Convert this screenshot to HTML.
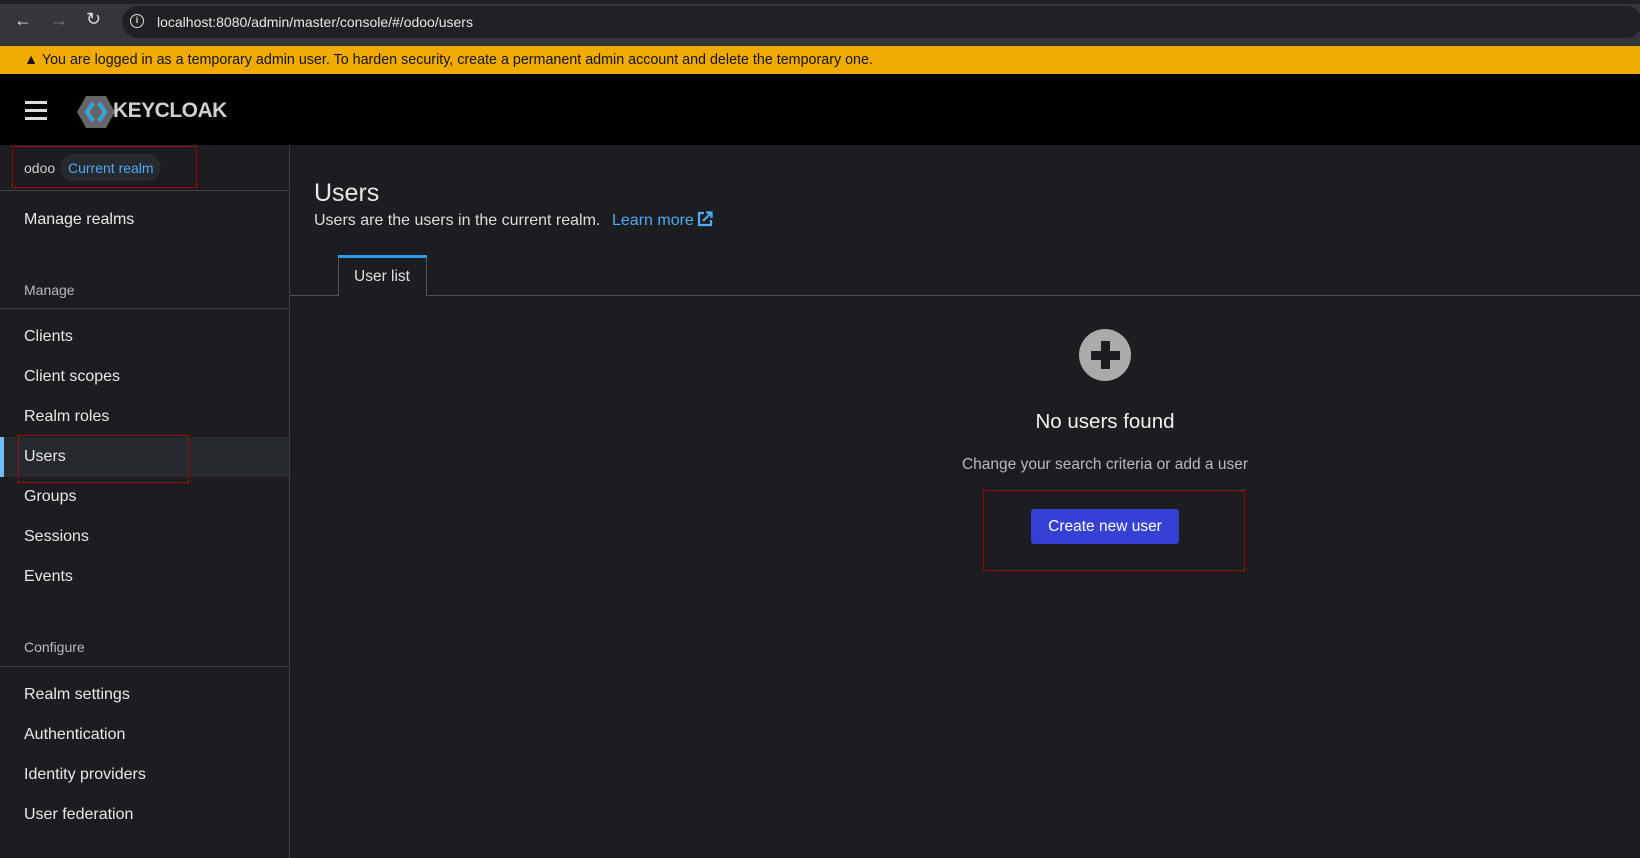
<!DOCTYPE html>
<html><head><meta charset="utf-8"><style>
*{margin:0;padding:0;box-sizing:border-box}
body{width:1640px;height:858px;overflow:hidden;background:#1b1d21;font-family:"Liberation Sans",sans-serif;color:#e0e0e0;position:relative}
.a{position:absolute;white-space:nowrap}
.nav{font-size:16px;color:#e8e8e8;left:24px}
.sec{font-size:14px;color:#b8bbbe;left:24px}
</style></head><body>
<div class="a" style="left:0;top:0;width:1640px;height:46px;background:#35363a"></div>
<div class="a" style="left:0;top:0;width:1640px;height:4px;background:#202124"></div>
<div class="a" style="left:122px;top:6px;width:1520px;height:32px;border-radius:16px;background:#202124"></div>
<div class="a" style="left:14px;top:10px;font-size:18px;color:#ddd">&#8592;</div>
<div class="a" style="left:50px;top:10px;font-size:18px;color:#777">&#8594;</div>
<div class="a" style="left:86px;top:9px;font-size:18px;color:#ddd">&#8635;</div>
<div class="a" style="left:130px;top:14px;width:14px;height:14px;border:1.5px solid #ddd;border-radius:50%;font-size:9px;text-align:center;line-height:11px;color:#ddd;font-weight:bold">i</div>
<div class="a" style="left:157px;top:14px;font-size:14px;color:#e8e8e8">localhost:8080/admin/master/console/#/odoo/users</div>
<div class="a" style="left:0;top:46px;width:1640px;height:28px;background:#f0ab00"></div>
<div class="a" style="left:24px;top:52px;font-size:14.3px;color:#151515">&#9650; You are logged in as a temporary admin user. To harden security, create a permanent admin account and delete the temporary one.</div>
<div class="a" style="left:0;top:74px;width:1640px;height:71px;background:#000"></div>
<div class="a" style="left:25px;top:101px;width:22px;height:3px;background:#ddd;box-shadow:0 8px 0 #ddd,0 16px 0 #ddd"></div>
<svg class="a" style="left:76px;top:95px" width="40" height="34" viewBox="0 0 40 34"><polygon points="10,1 30,1 39,17 30,33 10,33 1,17" fill="#666"/><path d="M17 8 L11 17 L17 26 M23 8 L29 17 L23 26" stroke="#39a5dc" stroke-width="4" fill="none"/></svg>
<div class="a" style="left:113px;top:99px;font-size:21px;font-weight:bold;color:#d0d0d0;letter-spacing:-0.5px">KEYCLOAK</div>
<div class="a" style="left:289px;top:145px;width:1px;height:713px;background:#3c3f42"></div>
<div class="a" style="left:0;top:190px;width:289px;height:1px;background:#3c3f42"></div>
<div class="a" style="left:12px;top:146px;width:185px;height:42px;border:1.5px solid #a30000"></div>
<div class="a" style="left:24px;top:160px;font-size:14px;color:#ccc">odoo</div>
<div class="a" style="left:60px;top:154px;width:101px;height:27px;border-radius:14px;background:#26292d"></div>
<div class="a" style="left:68px;top:160px;font-size:14px;color:#4dabf7">Current realm</div>
<div class="a nav" style="top:211px">Manage realms</div>
<div class="a sec" style="top:282px">Manage</div>
<div class="a" style="left:0;top:308px;width:289px;height:1px;background:#3c3f42"></div>
<div class="a nav" style="top:328px">Clients</div>
<div class="a nav" style="top:368px">Client scopes</div>
<div class="a nav" style="top:408px">Realm roles</div>
<div class="a" style="left:0;top:437px;width:289px;height:40px;background:#26292d"></div>
<div class="a" style="left:0;top:437px;width:4px;height:40px;background:#73bcf7"></div>
<div class="a" style="left:18px;top:435px;width:171px;height:48px;border:1.5px solid #a30000"></div>
<div class="a nav" style="top:448px">Users</div>
<div class="a nav" style="top:488px">Groups</div>
<div class="a nav" style="top:528px">Sessions</div>
<div class="a nav" style="top:568px">Events</div>
<div class="a sec" style="top:639px">Configure</div>
<div class="a" style="left:0;top:666px;width:289px;height:1px;background:#3c3f42"></div>
<div class="a nav" style="top:686px">Realm settings</div>
<div class="a nav" style="top:726px">Authentication</div>
<div class="a nav" style="top:766px">Identity providers</div>
<div class="a nav" style="top:806px">User federation</div>
<div class="a" style="left:314px;top:179px;font-size:25px;color:#e8e8e8">Users</div>
<div class="a" style="left:314px;top:212px;font-size:16px;color:#ddd">Users are the users in the current realm.</div>
<div class="a" style="left:612px;top:212px;font-size:16px;color:#4dabf7">Learn more</div>
<svg class="a" style="left:697px;top:211px" width="16" height="16" viewBox="0 0 16 16"><path d="M7 2H2v12h12V9" stroke="#4dabf7" stroke-width="2.2" fill="none"/><path d="M6 10L14 2M9 1.5h5.5V7" stroke="#4dabf7" stroke-width="2.2" fill="none"/></svg>
<div class="a" style="left:290px;top:295px;width:1350px;height:1px;background:#4f5255"></div>
<div class="a" style="left:338px;top:255px;width:89px;height:41px;border:1px solid #4f5255;border-bottom:none;background:#1b1d21"></div>
<div class="a" style="left:338px;top:255px;width:89px;height:3px;background:#2b9af3"></div>
<div class="a" style="left:354px;top:268px;font-size:15.5px;color:#e0e0e0">User list</div>
<div class="a" style="left:1079px;top:329px;width:52px;height:52px;border-radius:50%;background:#aaa"></div>
<div class="a" style="left:1101px;top:341px;width:9px;height:28px;background:#1b1d21"></div>
<div class="a" style="left:1091px;top:351px;width:29px;height:9px;background:#1b1d21"></div>
<div class="a" style="left:0;top:410px;width:2210px;text-align:center;font-size:20.5px;color:#f0f0f0">No users found</div>
<div class="a" style="left:0;top:456px;width:2210px;text-align:center;font-size:15.5px;color:#b8bbbe">Change your search criteria or add a user</div>
<div class="a" style="left:983px;top:490px;width:262px;height:81px;border:1.5px solid #a30000"></div>
<div class="a" style="left:1031px;top:509px;width:148px;height:35px;background:#3441d4;border-radius:3px;color:#fff;font-size:15.5px;text-align:center;line-height:35px">Create new user</div>
</body></html>
